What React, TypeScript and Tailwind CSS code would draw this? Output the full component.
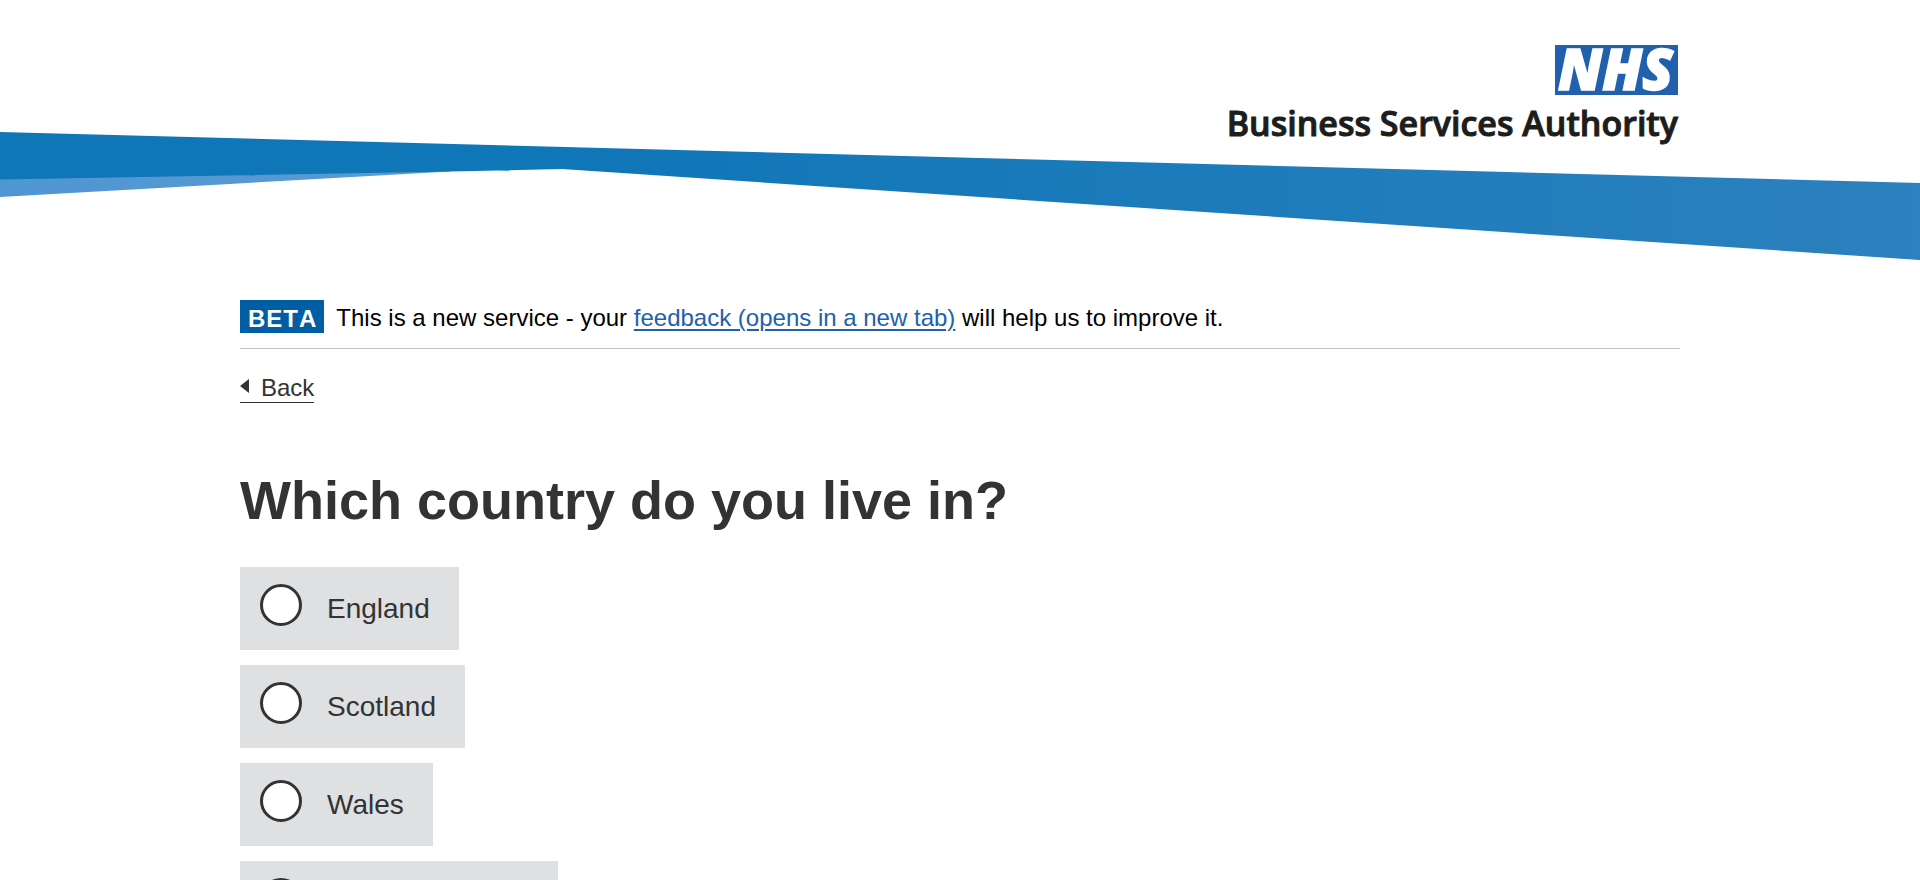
const countries = ["England", "Scotland", "Wales", "Northern Ireland"];

function Logo() {
  return (
    <a
      href="#"
      className="mr-[2px] flex flex-col items-end font-['Open_Sans','Noto_Sans',sans-serif]"
    >
      <svg className="h-[50px] w-[123px]" viewBox="0 0 123 50" role="img" aria-label="NHS">
        <rect width="123" height="50" fill="#2160ad" />
        <text
          x="3"
          y="45"
          className="text-[56px] font-extrabold italic"
          fill="#fff"
          stroke="#fff"
          strokeWidth="1.5"
        >
          NHS
        </text>
      </svg>
      <span className="text-[34px] leading-[56px] font-semibold text-[#1d1d1b] [-webkit-text-stroke:1px_#1d1d1b]">
        Business Services Authority
      </span>
    </a>
  );
}

function Swoosh() {
  return (
    <svg
      className="-mt-[19px] block h-[128px] w-full"
      viewBox="0 0 1920 128"
      preserveAspectRatio="none"
      aria-hidden="true"
    >
      <defs>
        <linearGradient id="band" x1="0" x2="1920" y1="0" y2="0" gradientUnits="userSpaceOnUse">
          <stop offset="0" stopColor="#0f76b8" />
          <stop offset="0.3" stopColor="#0f76b8" />
          <stop offset="1" stopColor="#2c81be" />
        </linearGradient>
        <linearGradient id="shade" x1="0" x2="450" y1="0" y2="0" gradientUnits="userSpaceOnUse">
          <stop offset="0" stopColor="#4f96d2" />
          <stop offset="1" stopColor="#5b9ad5" />
        </linearGradient>
      </defs>
      <path d="M0 40 L0 65 L450 39.5 L450 30 Z" fill="url(#shade)" />
      <path d="M0 0 L1920 51 L1920 128 L562 37 L450 39.5 L0 47.5 Z" fill="url(#band)" />
    </svg>
  );
}

export default function App() {
  return (
    <div className="overflow-x-hidden bg-white font-['Liberation_Sans',Arial,sans-serif] text-[#333]">
      <header>
        <div className="mx-auto flex max-w-[1440px] justify-end pt-[45px]">
          <Logo />
        </div>
        <Swoosh />
      </header>

      <main className="mx-auto max-w-[1440px]">
        <div className="mt-10 flex items-start gap-3 border-b border-[#bfc1c3] pb-3 text-2xl text-black">
          <strong className="bg-[#005ea5] pt-1 pr-[7px] pl-2 leading-[29px] tracking-[1px] text-white [font-kerning:none]">
            BETA
          </strong>
          <p className="leading-[36px]">
            This is a new service - your{" "}
            <a href="#" className="text-[#2160ad] underline decoration-2 underline-offset-[3px]">
              feedback (opens in a new tab)
            </a>{" "}
            will help us to improve it.
          </p>
        </div>

        <a
          href="#"
          className="mt-6 inline-flex items-start gap-3 border-b border-[#333] text-2xl leading-[29px]"
        >
          <svg className="mt-1.5 h-[14px] w-[9px]" viewBox="0 0 9 14" aria-hidden="true">
            <path d="M9 0 V14 L0 7 Z" fill="#333" />
          </svg>
          Back
        </a>

        <form>
          <fieldset>
            <legend className="pt-[63px] pb-[33px]">
              <h1 className="text-[54px] leading-[68px] font-bold">Which country do you live in?</h1>
            </legend>
            <div className="flex flex-col items-start gap-[15px]">
              {countries.map((name) => (
                <label
                  key={name}
                  className="flex h-[83px] cursor-pointer items-start gap-[25px] bg-[#dee0e2] pt-[17px] pr-[29px] pl-5 text-[28px] leading-[50px]"
                >
                  <input
                    type="radio"
                    name="country"
                    value={name}
                    className="size-[42px] shrink-0 appearance-none rounded-full border-3 border-[#333] bg-white checked:bg-[#333] checked:bg-clip-content checked:p-2"
                  />
                  {name}
                </label>
              ))}
            </div>
          </fieldset>
        </form>
      </main>
    </div>
  );
}
